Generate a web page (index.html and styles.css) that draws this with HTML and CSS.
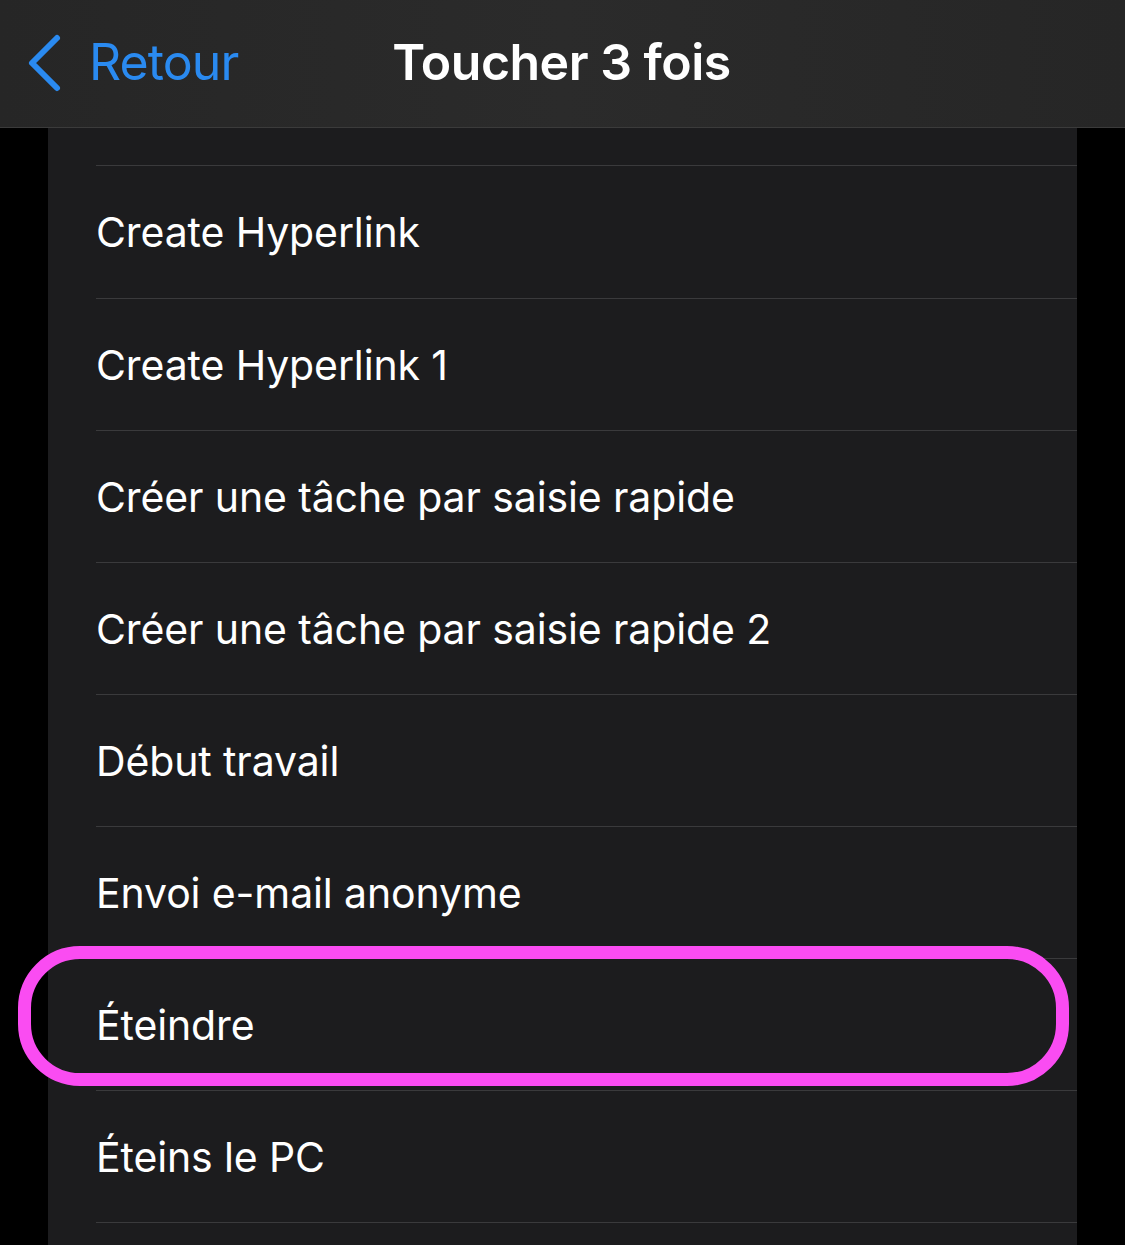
FILE: index.html
```html
<!DOCTYPE html>
<html lang="fr">
<head>
    <meta charset="UTF-8">
    <title>Toucher 3 fois</title>
    <link rel="stylesheet" href="styles.css">
</head>
<body>
    <div class="nav-bar">
        <div class="back">
            <svg class="chevron" width="36" height="60" viewBox="0 0 36 60">
                <path d="M31 5 L6 30 L31 55" fill="none" stroke="#2a8af0" stroke-width="6" stroke-linecap="round" stroke-linejoin="round"/>
            </svg>
            <span>Retour</span>
        </div>
        <div class="title">Toucher 3 fois</div>
    </div>

    <div class="list">
        <div class="row top-cut"><div class="cell"></div></div>
        <div class="row"><div class="cell">Create Hyperlink</div></div>
        <div class="row"><div class="cell">Create Hyperlink 1</div></div>
        <div class="row"><div class="cell">Créer une tâche par saisie rapide</div></div>
        <div class="row"><div class="cell">Créer une tâche par saisie rapide 2</div></div>
        <div class="row"><div class="cell">Début travail</div></div>
        <div class="row"><div class="cell">Envoi e-mail anonyme</div></div>
        <div class="row highlighted">
            <div class="cell">Éteindre</div>
            <div class="ring"></div>
        </div>
        <div class="row"><div class="cell">Éteins le PC</div></div>
        <div class="row"><div class="cell"></div></div>
    </div>
</body>
</html>
```

FILE: styles.css
```css
html, body { margin: 0; padding: 0; background: #000; }
body { width: 1125px; height: 1245px; overflow: hidden; font-family: Inter, "Noto Sans", sans-serif; color: #fff; }

.nav-bar { height: 127px; background: linear-gradient(90deg, #262626, #2b2b2b 50%, #262626); border-bottom: 1px solid #3b3b3b; position: relative; display: flex; align-items: center; }
.back { display: flex; align-items: center; margin-left: 26px; color: #2a8af0; font-size: 50px; letter-spacing: -0.9px; }
.chevron { margin-right: 27px; margin-top: -2px; }
.back span { margin-top: -4px; }
.title { position: absolute; left: 0; right: 0; top: 0; height: 127px; display: flex; align-items: center; justify-content: center; font-size: 50px; font-weight: 600; letter-spacing: -0.5px; padding-right: 2px; margin-top: -2px; }

.list { margin: 0 48px; background: #1c1c1e; }
.row { height: 132px; padding-left: 48px; position: relative; }
.row.top-cut { height: 38px; }
.cell { height: 131px; border-top: 1px solid #3a3a3c; display: flex; align-items: center; font-size: 41px; letter-spacing: -0.12px; }
.top-cut .cell { height: 37px; border-top: none; border-bottom: 1px solid #3a3a3c; }
.row.top-cut + .row .cell { border-top: none; height: 132px; }

.ring { position: absolute; left: -30px; right: 8px; top: -12px; bottom: 4px; border: 13px solid #fa4cf2; border-radius: 62px; }
```
